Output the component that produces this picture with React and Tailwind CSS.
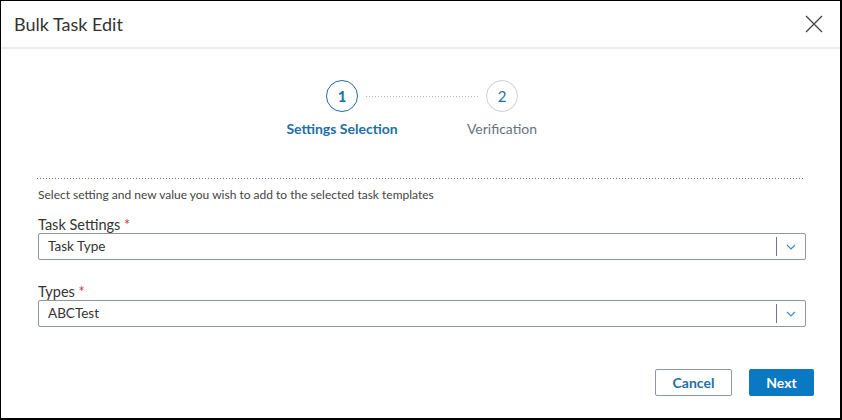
import React from "react";

function Chevron() {
  return (
    <svg width="10" height="6" viewBox="0 0 10 6" fill="none">
      <path d="M1 1l4 4 4-4" stroke="#3b8fd0" strokeWidth="1.2" />
    </svg>
  );
}

function Select({ value }) {
  return (
    <div className="flex h-[27px] items-center rounded-[2px] border border-[#8e97a6] bg-white">
      <div className="flex-1 pl-[9px] text-[13.5px] text-[#333]">{value}</div>
      <div className="h-[19px] w-[1.5px] bg-[#6d7788]" />
      <div className="flex w-[28px] items-center justify-center">
        <Chevron />
      </div>
    </div>
  );
}

export default function App() {
  return (
    <div
      className="flex h-[420px] w-[842px] flex-col border-l border-t border-r-2 border-b-2 border-black bg-white"
      style={{ fontFamily: "Lato, 'Open Sans', sans-serif" }}
    >
      <div className="flex h-[48px] items-center justify-between border-b-2 border-[#ececec] pl-[13px] pr-[17px]">
        <div className="text-[18px] text-[#333]">Bulk Task Edit</div>
        <svg width="18" height="18" viewBox="0 0 18 18" fill="none">
          <path d="M1 1l16 16M17 1L1 17" stroke="#444" strokeWidth="1.3" />
        </svg>
      </div>

      <div className="mt-[31px] flex items-center pl-[325px]">
        <div className="flex h-[32px] w-[32px] items-center justify-center rounded-full border-[1.5px] border-[#1d6fa5] text-[15px] font-bold text-[#1d6fa5]">
          1
        </div>
        <div className="mx-[8px] h-px w-[112px] bg-[linear-gradient(to_right,#b8bcc4_1px,transparent_1px)] bg-[length:3px_1px]" />
        <div className="flex h-[32px] w-[32px] items-center justify-center rounded-full border-[1.5px] border-[#ccd0d8] text-[15px] text-[#1d6fa5]">
          2
        </div>
      </div>
      <div className="mt-[8px] flex gap-[40px] pl-[281px] leading-[18px]">
        <div className="w-[120px] whitespace-nowrap text-center text-[14px] font-bold text-[#1d6fa5]">
          Settings Selection
        </div>
        <div className="w-[120px] whitespace-nowrap text-center text-[14px] text-[#6b7280]">
          Verification
        </div>
      </div>

      <div className="ml-[36px] mr-[35px] mt-[40px] h-px bg-[linear-gradient(to_right,#777_1px,transparent_1px)] bg-[length:3px_1px]" />
      <div className="ml-[37px] mt-[8px] text-[12px] leading-[16px] text-[#444]">
        Select setting and new value you wish to add to the selected task templates
      </div>

      <div className="mt-[14px] pl-[37px] pr-[34px]">
        <div className="text-[14.5px] leading-[16px] text-[#333]">
          Task Settings <span className="text-[#d0354a]">*</span>
        </div>
        <Select value="Task Type" />
        <div className="mt-[24px] text-[14.5px] leading-[16px] text-[#333]">
          Types <span className="text-[#d0354a]">*</span>
        </div>
        <Select value="ABCTest" />
      </div>

      <div className="mt-[42px] flex justify-end gap-[17px] pr-[26px]">
        <button className="h-[27px] w-[77px] rounded-[2px] border border-[#8e97a6] bg-white text-[14px] font-bold text-[#1d6fa5]">
          Cancel
        </button>
        <button className="h-[27px] w-[65px] rounded-[2px] bg-[#0a78c2] text-[14px] font-bold text-white">
          Next
        </button>
      </div>
    </div>
  );
}
